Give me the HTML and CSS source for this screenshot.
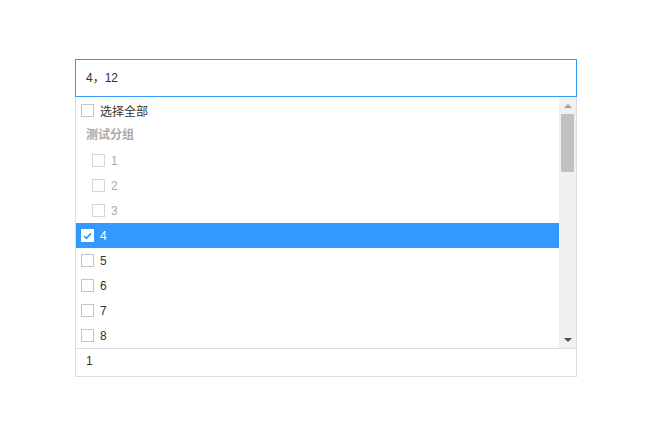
FILE: index.html
```html
<!DOCTYPE html>
<html>
<head>
<meta charset="utf-8">
<link rel="stylesheet" href="styles.css">
</head>
<body>
<div class="select">
  <div class="input">4，12</div>
  <div class="dropdown">
    <div class="list">
      <div class="items">
        <div class="row"><span class="cb"></span><span class="label">选择全部</span></div>
        <div class="group">测试分组</div>
        <div class="row child"><span class="cb"></span><span class="label">1</span></div>
        <div class="row child"><span class="cb"></span><span class="label">2</span></div>
        <div class="row child"><span class="cb"></span><span class="label">3</span></div>
        <div class="row active"><span class="cb checked"><svg width="9" height="8" viewBox="0 0 9 8"><path d="M1 4.2 L3.4 6.4 L8 1.4" fill="none" stroke="#3399ff" stroke-width="1.6"/></svg></span><span class="label">4</span></div>
        <div class="row"><span class="cb"></span><span class="label">5</span></div>
        <div class="row"><span class="cb"></span><span class="label">6</span></div>
        <div class="row"><span class="cb"></span><span class="label">7</span></div>
        <div class="row"><span class="cb"></span><span class="label">8</span></div>
      </div>
      <div class="scrollbar">
        <div class="btn"><span class="tri up"></span></div>
        <div class="track"><div class="thumb"></div></div>
        <div class="btn"><span class="tri down"></span></div>
      </div>
    </div>
    <div class="footer">1</div>
  </div>
</div>
</body>
</html>
```
FILE: styles.css
```css
html, body {
  margin: 0;
  padding: 0;
  background: #ffffff;
}
body {
  font-family: "Liberation Sans", "Noto Sans CJK SC", sans-serif;
  font-size: 12px;
  color: #333333;
}
.select {
  margin: 59px 0 0 75px;
  width: 502px;
}
.input {
  box-sizing: border-box;
  height: 38px;
  border: 1px solid #3399ff;
  padding-left: 10px;
  line-height: 36px;
  color: #333333;
}
.dropdown {
  border: 1px solid #dddddd;
  border-top: none;
}
.list {
  display: flex;
  height: 251px;
}
.items {
  flex: 1;
  padding-top: 1px;
  overflow: hidden;
}
.row {
  display: flex;
  align-items: center;
  height: 25px;
  padding-left: 5px;
}
.row.child {
  padding-left: 16px;
  color: #aaaaaa;
}
.row.child .cb {
  border-color: #d6d6d6;
}
.cb {
  box-sizing: border-box;
  width: 13px;
  height: 13px;
  border: 1px solid #c4c4c4;
  background: #ffffff;
  margin-right: 6px;
  display: flex;
  align-items: center;
  justify-content: center;
}
.cb.checked {
  border-color: #ffffff;
}
.row.active {
  background: #3399ff;
  color: #ffffff;
}
.group {
  height: 25px;
  line-height: 25px;
  padding-left: 10px;
  font-weight: bold;
  color: #aaaaaa;
}
.scrollbar {
  width: 17px;
  background: #f0f0f0;
  display: flex;
  flex-direction: column;
}
.btn {
  height: 17px;
  display: flex;
  align-items: center;
  justify-content: center;
}
.track {
  flex: 1;
  padding: 0 2px;
}
.thumb {
  height: 58px;
  background: #c1c1c1;
}
.tri {
  width: 0;
  height: 0;
  border-left: 4px solid transparent;
  border-right: 4px solid transparent;
}
.tri.up {
  border-bottom: 4px solid #a3a3a3;
}
.tri.down {
  border-top: 4px solid #505050;
}
.footer {
  border-top: 1px solid #dddddd;
  height: 27px;
  line-height: 24px;
  padding-left: 10px;
  color: #333333;
}
```
